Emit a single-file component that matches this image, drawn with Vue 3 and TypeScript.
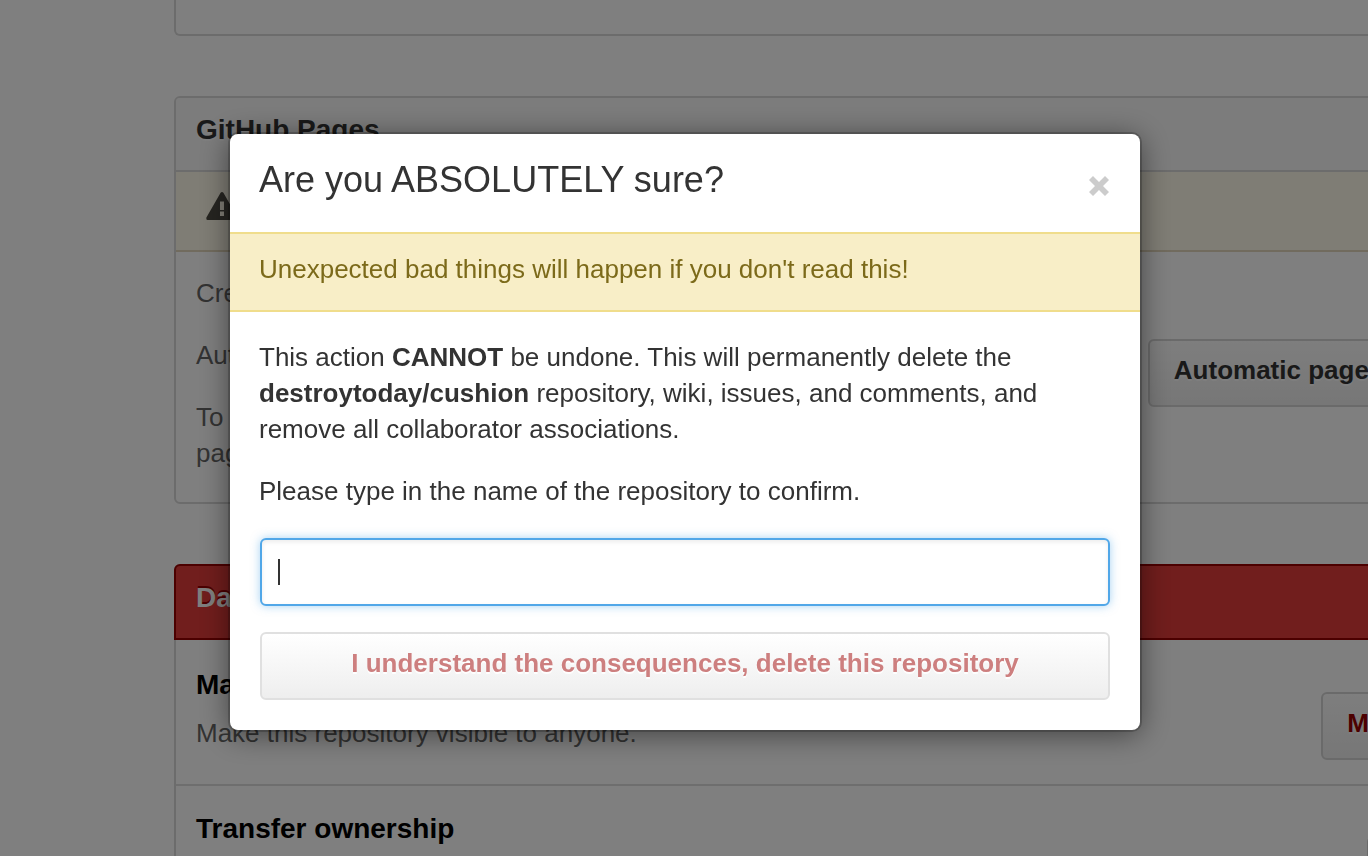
<script setup lang="ts">
import { ref } from 'vue'

interface DangerItem {
  title: string
  text: string
  action: string
}

const dangerItems: DangerItem[] = [
  { title: 'Make this repository public', text: 'Make this repository visible to anyone.', action: 'Make public' },
  { title: 'Transfer ownership', text: 'Transfer this repo to another user or to an organization.', action: 'Transfer' },
]

const repository = 'destroytoday/cushion'
const typedName = ref('')
const open = ref(true)
</script>

<template>
  <div class="page">
    <main class="settings">
      <section class="panel features"></section>

      <section class="panel">
        <h3 class="panel-title">GitHub Pages</h3>
        <div class="flash">
          <svg class="alert-icon" viewBox="0 0 32 28" aria-hidden="true">
            <path fill-rule="evenodd" d="M14.6 .8Q16 -.8 17.4 .8L31.6 25.6Q32 28 30.4 28H1.6Q0 28 .4 25.6ZM14 9.5V18H18V9.5ZM14 19.5V24H18V19.5Z" />
          </svg>
        </div>
        <div class="pages-body">
          <div class="pages-text">
            <p>Create pages for your project.</p>
            <p>Author your content and publish.</p>
            <p>To publish a page manually, push an HTML site to a<br />pages branch of this repository.</p>
          </div>
          <button type="button" class="btn">Automatic page generator</button>
        </div>
      </section>

      <section class="panel danger">
        <h3 class="panel-title danger-title">Danger Zone</h3>
        <div v-for="item in dangerItems" :key="item.title" class="danger-item">
          <div>
            <h4>{{ item.title }}</h4>
            <p>{{ item.text }}</p>
          </div>
          <button type="button" class="btn btn-danger">{{ item.action }}</button>
        </div>
      </section>
    </main>

    <div v-if="open" class="overlay">
      <div class="dialog" role="dialog" aria-modal="true" aria-labelledby="dialog-title">
        <header class="dialog-head">
          <h2 id="dialog-title">Are you ABSOLUTELY sure?</h2>
          <button type="button" class="close" aria-label="Close" @click="open = false">
            <svg viewBox="0 0 20 20" aria-hidden="true">
              <path d="M4 0L10 6L16 0L20 4L14 10L20 16L16 20L10 14L4 20L0 16L6 10L0 4Z" />
            </svg>
          </button>
        </header>
        <div class="warning">Unexpected bad things will happen if you don't read this!</div>
        <form class="dialog-body" @submit.prevent>
          <p>
            This action <strong>CANNOT</strong> be undone. This will permanently delete the
            <strong>{{ repository }}</strong> repository, wiki, issues, and comments, and remove all
            collaborator associations.
          </p>
          <p><label for="repo-name">Please type in the name of the repository to confirm.</label></p>
          <div class="field">
            <input id="repo-name" v-model="typedName" type="text" autocomplete="off" />
            <span v-if="!typedName" class="caret"></span>
          </div>
          <button type="submit" class="btn confirm" :disabled="typedName !== repository">
            I understand the consequences, delete this repository
          </button>
        </form>
      </div>
    </div>
  </div>
</template>

<style>
body {
  margin: 0;
  background: #fff;
}
</style>

<style scoped>
.page {
  height: 100vh;
  overflow: hidden;
  font: 26px/36px "Liberation Sans", Arial, Helvetica, sans-serif;
  color: #333;
}

.page * {
  box-sizing: border-box;
}

h2,
h3,
h4,
p {
  margin: 0;
}

.settings {
  display: flex;
  flex-direction: column;
  gap: 60px;
  margin-left: 174px;
  margin-right: -176px;
}

.panel {
  border: 2px solid #d8d8d8;
  border-radius: 6px;
}

.features {
  height: 36px;
  border-top: 0;
  border-top-left-radius: 0;
  border-top-right-radius: 0;
}

.panel-title {
  padding: 14px 20px 22px;
  font-size: 28px;
  line-height: 36px;
  color: #333;
  background: #f8f8f8;
  border-radius: 4px 4px 0 0;
  text-shadow: 0 2px 0 #fff;
}

.flash {
  height: 82px;
  padding: 20px 30px;
  background: #fffbea;
  border-top: 2px solid #d8d8d8;
  border-bottom: 2px solid #e3d7bc;
}

.alert-icon {
  display: block;
  width: 32px;
  height: 28px;
  fill: #4c4a42;
}

.pages-body {
  display: flex;
  justify-content: space-between;
  align-items: center;
  padding: 23px 20px 31px;
  color: #666;
}

.pages-text {
  display: flex;
  flex-direction: column;
  gap: 26px;
}

.btn {
  height: 68px;
  padding: 0 24px 6px;
  border: 2px solid #d5d5d5;
  border-radius: 6px;
  background: linear-gradient(#fcfcfc, #eee);
  color: #333;
  font: bold 26px/36px "Liberation Sans", Arial, Helvetica, sans-serif;
  text-shadow: 0 2px 0 rgba(255, 255, 255, 0.9);
  white-space: nowrap;
}

.btn-danger {
  margin-top: 25px;
  color: #900;
}

.danger-title {
  margin: -2px -2px 2px;
  border: 2px solid #900;
  border-radius: 6px 6px 0 0;
  background: #e33c3a;
  color: #fff;
  text-shadow: 0 -2px 0 #900;
}

.danger-item {
  display: flex;
  justify-content: space-between;
  align-items: flex-start;
  padding: 25px 20px 24px;
  color: #666;
}

.danger-item + .danger-item {
  border-top: 2px solid #ddd;
}

.danger-item h4 {
  margin-bottom: 12px;
  font-size: 28px;
  line-height: 36px;
  color: #000;
}

.overlay {
  position: fixed;
  inset: 0;
  padding: 134px 228px 0 230px;
  background: rgba(0, 0, 0, 0.5);
  box-sizing: border-box;
}

.dialog {
  border-radius: 8px;
  background: #fff;
  box-shadow: 0 0 0 2px rgba(0, 0, 0, 0.2), 0 4px 30px rgba(0, 0, 0, 0.5);
}

.dialog-head {
  display: flex;
  justify-content: space-between;
  align-items: center;
  height: 98px;
  padding: 0 31px 0 29px;
}

.dialog-head h2 {
  padding-bottom: 6px;
  font-size: 36px;
  line-height: 44px;
  font-weight: normal;
}

.close {
  padding: 6px 0 0;
  border: 0;
  background: none;
}

.close svg {
  display: block;
  width: 20px;
  height: 20px;
  fill: #ccc;
}

.warning {
  padding: 17px 29px 23px;
  border: solid #f0dd8c;
  border-width: 2px 0;
  background: #f8eec7;
  color: #7c6a1a;
}

.dialog-body {
  padding: 27px 30px 30px;
}

.dialog-body p {
  margin: 0 -1px 26px;
}

.dialog-body p + p {
  margin-bottom: 29px;
}

.field {
  position: relative;
  margin-bottom: 26px;
}

.field input {
  display: block;
  width: 100%;
  height: 68px;
  padding: 0 16px;
  border: 2px solid #51a7e8;
  border-radius: 6px;
  outline: 0;
  background: #fff;
  font: inherit;
  color: #333;
  box-shadow: inset 0 2px 4px rgba(0, 0, 0, 0.08), 0 0 10px rgba(81, 167, 232, 0.5);
}

.caret {
  position: absolute;
  left: 18px;
  top: 21px;
  width: 2px;
  height: 26px;
  background: #333;
  pointer-events: none;
}

.confirm {
  display: block;
  width: 100%;
}

.confirm:disabled {
  border-color: #e0e0e0;
  background: linear-gradient(#fff, #eee);
  color: #cd7f7f;
}
</style>
